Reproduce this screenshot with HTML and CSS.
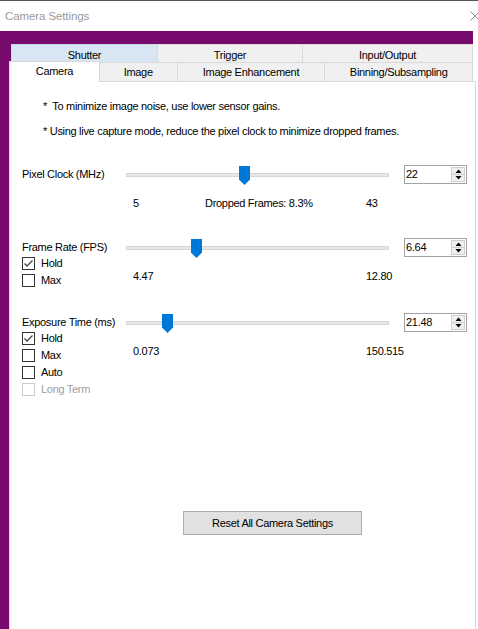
FILE: index.html
```html
<!DOCTYPE html>
<html>
<head>
<meta charset="utf-8">
<link rel="stylesheet" href="styles.css">
</head>
<body>
<div class="window">
  <div class="titlebar">
    <span class="title">Camera Settings</span>
    <svg class="close" width="10" height="10" viewBox="0 0 10 10"><path d="M0.5 0.5 L9.5 9.5 M9.5 0.5 L0.5 9.5" stroke="#888" stroke-width="1" fill="none"/></svg>
  </div>
  <div class="frame">
    <div class="tabs">
      <div class="tabrow top">
        <div class="tab hover t-shutter">Shutter</div>
        <div class="tab t-trigger">Trigger</div>
        <div class="tab t-io">Input/Output</div>
      </div>
      <div class="tabrow">
        <div class="tab selected t-camera">Camera</div>
        <div class="tab t-image">Image</div>
        <div class="tab t-enh">Image Enhancement</div>
        <div class="tab t-bin">Binning/Subsampling</div>
      </div>
    </div>
    <div class="panel">
      <p class="note note1">*&nbsp; To minimize image noise, use lower sensor gains.</p>
      <p class="note note2">* Using live capture mode, reduce the pixel clock to minimize dropped frames.</p>

      <section class="setting s-pixel">
        <div class="label">Pixel Clock (MHz)</div>
        <div class="slider" style="--pos:0.447">
          <div class="track"></div>
          <svg class="thumb" width="11" height="19" viewBox="0 0 11 19"><polygon points="0,0 11,0 11,13.5 5.5,19 0,13.5" fill="#0078d7"/></svg>
        </div>
        <div class="spin">
          <span class="spin-val">22</span>
          <div class="spin-btns">
            <div class="spin-btn"><svg width="7" height="4" viewBox="0 0 7 4"><polygon points="0.5,4 3.5,0.5 6.5,4" fill="#000"/></svg></div>
            <div class="spin-btn"><svg width="7" height="4" viewBox="0 0 7 4"><polygon points="0.5,0 6.5,0 3.5,3.5" fill="#000"/></svg></div>
          </div>
        </div>
        <div class="checks"></div>
        <div class="values">
          <span>5</span>
          <span>Dropped Frames: 8.3%</span>
          <span>43</span>
        </div>
      </section>

      <section class="setting s-frame">
        <div class="label">Frame Rate (FPS)</div>
        <div class="slider" style="--pos:0.257">
          <div class="track"></div>
          <svg class="thumb" width="11" height="19" viewBox="0 0 11 19"><polygon points="0,0 11,0 11,13.5 5.5,19 0,13.5" fill="#0078d7"/></svg>
        </div>
        <div class="spin">
          <span class="spin-val">6.64</span>
          <div class="spin-btns">
            <div class="spin-btn"><svg width="7" height="4" viewBox="0 0 7 4"><polygon points="0.5,4 3.5,0.5 6.5,4" fill="#000"/></svg></div>
            <div class="spin-btn"><svg width="7" height="4" viewBox="0 0 7 4"><polygon points="0.5,0 6.5,0 3.5,3.5" fill="#000"/></svg></div>
          </div>
        </div>
        <div class="checks">
          <label class="check"><span class="box checked"><svg width="11" height="11" viewBox="0 0 11 11"><path d="M1.5 5.5 L4 8 L9.5 2.5" stroke="#444" stroke-width="1.3" fill="none"/></svg></span>Hold</label>
          <label class="check"><span class="box"></span>Max</label>
        </div>
        <div class="values">
          <span>4.47</span>
          <span></span>
          <span>12.80</span>
        </div>
      </section>

      <section class="setting s-exp">
        <div class="label">Exposure Time (ms)</div>
        <div class="slider" style="--pos:0.142">
          <div class="track"></div>
          <svg class="thumb" width="11" height="19" viewBox="0 0 11 19"><polygon points="0,0 11,0 11,13.5 5.5,19 0,13.5" fill="#0078d7"/></svg>
        </div>
        <div class="spin">
          <span class="spin-val">21.48</span>
          <div class="spin-btns">
            <div class="spin-btn"><svg width="7" height="4" viewBox="0 0 7 4"><polygon points="0.5,4 3.5,0.5 6.5,4" fill="#000"/></svg></div>
            <div class="spin-btn"><svg width="7" height="4" viewBox="0 0 7 4"><polygon points="0.5,0 6.5,0 3.5,3.5" fill="#000"/></svg></div>
          </div>
        </div>
        <div class="checks">
          <label class="check"><span class="box checked"><svg width="11" height="11" viewBox="0 0 11 11"><path d="M1.5 5.5 L4 8 L9.5 2.5" stroke="#444" stroke-width="1.3" fill="none"/></svg></span>Hold</label>
          <label class="check"><span class="box"></span>Max</label>
          <label class="check"><span class="box"></span>Auto</label>
          <label class="check disabled"><span class="box"></span>Long Term</label>
        </div>
        <div class="values">
          <span>0.073</span>
          <span></span>
          <span>150.515</span>
        </div>
      </section>

      <div class="actions">
        <button class="reset">Reset All Camera Settings</button>
      </div>
    </div>
  </div>
</div>
</body>
</html>
```

FILE: styles.css
```css
* { box-sizing: border-box; }
html, body { margin: 0; padding: 0; }
body {
  width: 478px;
  height: 629px;
  overflow: hidden;
  font-family: "Liberation Sans", Arial, sans-serif;
  font-size: 11px;
  letter-spacing: -0.3px;
  color: #000;
  background: #fff;
}
.window {
  width: 478px;
  height: 629px;
  border-top: 1px solid #555;
  display: flex;
  flex-direction: column;
}
.titlebar {
  height: 30px;
  flex: none;
  background: #fff;
  display: flex;
  align-items: center;
  justify-content: space-between;
  padding: 0 0 0 5px;
}
.title {
  font-size: 11.5px;
  letter-spacing: -0.1px;
  color: #999;
}
.close { margin-right: -2px; }
.frame {
  flex: 1;
  background: linear-gradient(to right, #770a6d 0, #770a6d 473px, #fff 473px);
  padding-top: 13px;
  display: flex;
  flex-direction: column;
}
.tabs {
  margin-left: 11px;
  width: 462px;
}
.tabrow {
  display: flex;
  height: 19px;
}
.tabrow.top { height: 18px; }
.tab {
  background: #f0f0f0;
  border: 1px solid #d9d9d9;
  border-bottom: none;
  margin-left: -1px;
  display: flex;
  align-items: center;
  justify-content: center;
  line-height: 13px;
  padding-top: 1px;
}
.tabrow.top .tab { padding-top: 3px; }
.tab:first-child { margin-left: 0; }
.tab.hover { background: #d8e6f3; border-color: #c4d9ee; }
.tab.selected {
  background: #fff;
  margin-left: -2px;
  margin-top: -1px;
  height: 21px;
  position: relative;
  z-index: 1;
  padding-bottom: 3px;
}
.t-shutter { width: 147px; }
.t-trigger { width: 146px; }
.t-io { width: 171px; }
.t-camera { width: 91px; }
.t-image { width: 79px; }
.t-enh { width: 149px; }
.t-bin { width: 149px; }

.panel {
  flex: 1;
  margin-left: 9px;
  width: 467px;
  background: #fff;
  border: 1px solid #d9d9d9;
  border-bottom: none;
  padding: 18px 0 0 12px;
}
.note {
  margin: 0;
  padding-left: 21px;
  line-height: 13px;
  white-space: pre;
}
.note2 { margin-top: 12px; }

.setting {
  display: grid;
  grid-template-columns: 104px 263px 15px 63px;
  grid-template-rows: 19px auto;
}
.s-pixel { margin-top: 27px; }
.s-frame { margin-top: 28px; }
.s-exp { margin-top: 24px; }

.label {
  grid-column: 1;
  grid-row: 1;
  align-self: center;
  line-height: 13px;
}
.slider {
  grid-column: 2;
  grid-row: 1;
  position: relative;
}
.track {
  position: absolute;
  left: 0;
  right: 0;
  top: 8px;
  height: 4px;
  background: #e7e7e7;
  border: 1px solid #d6d6d6;
}
.thumb {
  position: absolute;
  top: 1px;
  left: calc(var(--pos) * 252px);
}
.spin {
  grid-column: 4;
  grid-row: 1;
  border: 1px solid #a3a3a3;
  background: #fff;
  display: flex;
  justify-content: space-between;
  align-items: stretch;
}
.spin-val {
  line-height: 17px;
  padding-left: 1px;
}
.spin-btns {
  width: 15px;
  padding: 1px 1px 1px 0;
  display: flex;
  flex-direction: column;
}
.spin-btn {
  flex: 1;
  background: #f0f0f0;
  border: 1px solid #cfcfcf;
  display: flex;
  align-items: center;
  justify-content: center;
}
.spin-btn + .spin-btn { border-top: none; }

.checks {
  grid-column: 1;
  grid-row: 2;
  margin-top: -2px;
  display: flex;
  flex-direction: column;
}
.check {
  height: 17px;
  display: flex;
  align-items: center;
  line-height: 13px;
}
.box {
  width: 13px;
  height: 13px;
  border: 1px solid #333;
  background: #fff;
  margin-right: 6px;
  display: flex;
  align-items: center;
  justify-content: center;
}
.check.disabled { color: #a0a0a0; }
.check.disabled .box { border-color: #cccccc; }

.values {
  grid-column: 2 / 5;
  grid-row: 2;
  align-self: start;
  margin-top: 13px;
  padding-left: 7px;
  display: grid;
  grid-template-columns: 72px 161px auto;
  line-height: 13px;
}

.actions {
  margin-top: 113px;
  padding-left: 161px;
}
.reset {
  width: 179px;
  height: 24px;
  background: #e1e1e1;
  border: 1px solid #adadad;
  font-family: "Liberation Sans", Arial, sans-serif;
  font-size: 11px;
  letter-spacing: -0.3px;
  color: #000;
  padding: 0;
}
```
